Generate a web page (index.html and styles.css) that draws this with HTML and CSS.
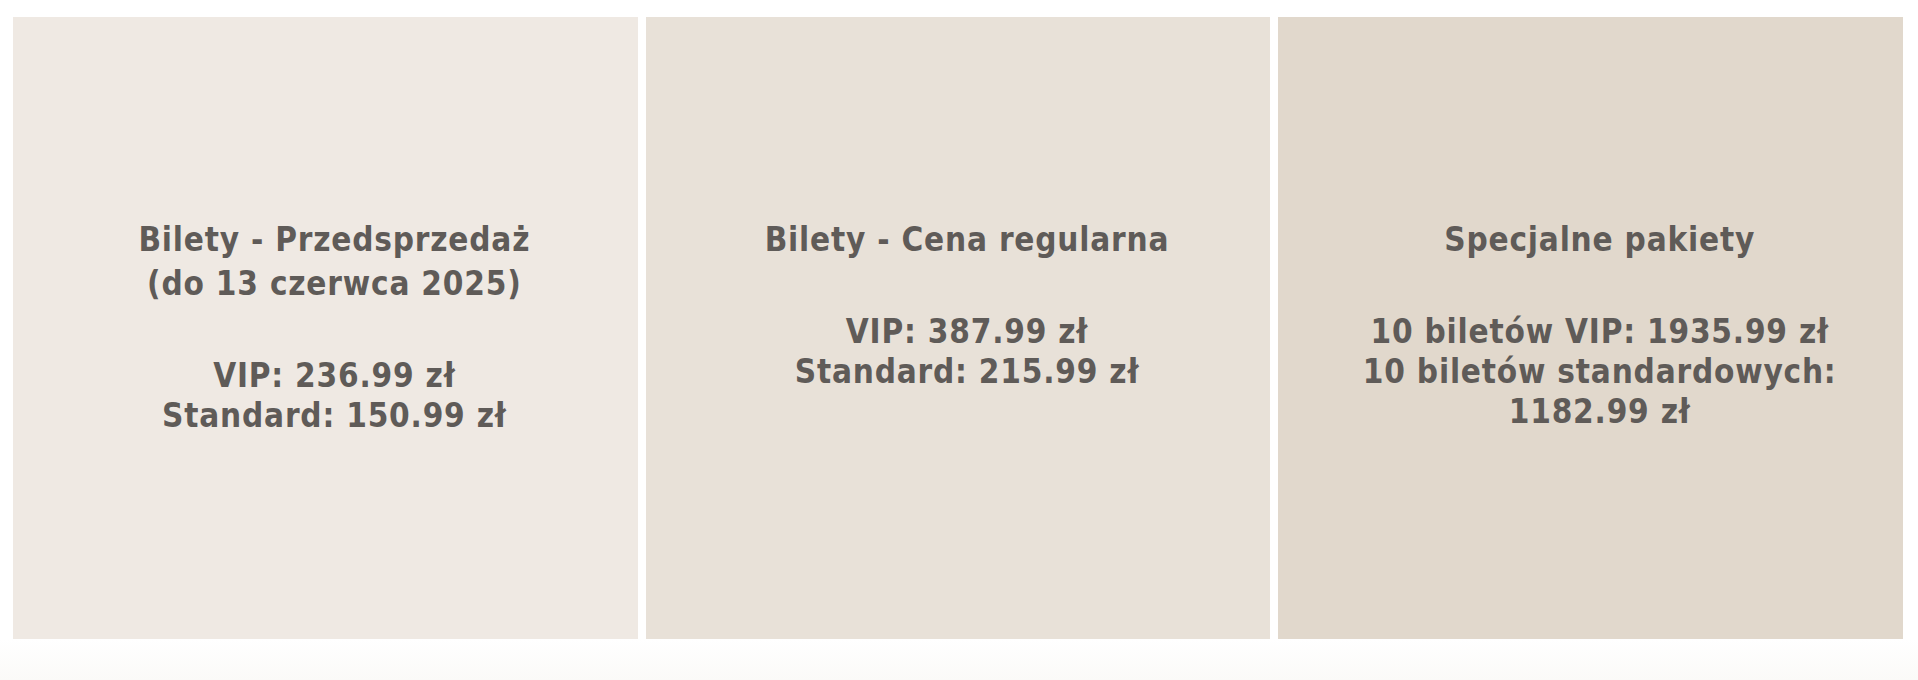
FILE: index.html
```html
<!DOCTYPE html>
<html lang="pl">
<head>
<meta charset="utf-8">
<title>Bilety</title>
<link rel="stylesheet" href="styles.css">
</head>
<body>
<section class="pricing">
  <div class="card card-presale">
    <h3 class="card-title">Bilety - Przedsprzedaż<br>(do 13 czerwca 2025)</h3>
    <p class="card-prices">VIP: 236.99 zł<br>Standard: 150.99 zł</p>
  </div>
  <div class="card card-regular">
    <h3 class="card-title">Bilety - Cena regularna</h3>
    <p class="card-prices">VIP: 387.99 zł<br>Standard: 215.99 zł</p>
  </div>
  <div class="card card-packages">
    <h3 class="card-title">Specjalne pakiety</h3>
    <p class="card-prices">10 biletów VIP: 1935.99 zł<br>10 biletów standardowych:<br>1182.99 zł</p>
  </div>
</section>
<div class="fade"></div>
</body>
</html>
```
FILE: styles.css
```css
html, body {
  margin: 0;
  padding: 0;
  background: #ffffff;
}
body {
  font-family: "DejaVu Sans Condensed", "DejaVu Sans", sans-serif;
  font-stretch: condensed;
  color: #5f5b58;
}
.pricing {
  display: flex;
  gap: 8px;
  padding: 17px 15px 0 13px;
}
.card {
  flex: 1 1 0;
  height: 622px;
  box-sizing: border-box;
  padding: 201px 21px 0 39px;
  text-align: center;
}
.card-presale { background: #efe9e3; }
.card-regular { background: #e8e1d8; }
.card-packages { background: #e1d8cc; }
.card-title {
  margin: 0;
  font-size: 33px;
  line-height: 44px;
  font-weight: bold;
  letter-spacing: 0.8px;
}
.card-prices {
  margin: 50px 0 0;
  font-size: 33px;
  line-height: 40px;
  font-weight: bold;
  letter-spacing: 0.8px;
}
.fade {
  height: 41px;
  background: linear-gradient(#ffffff, #fbfaf8);
}
```
